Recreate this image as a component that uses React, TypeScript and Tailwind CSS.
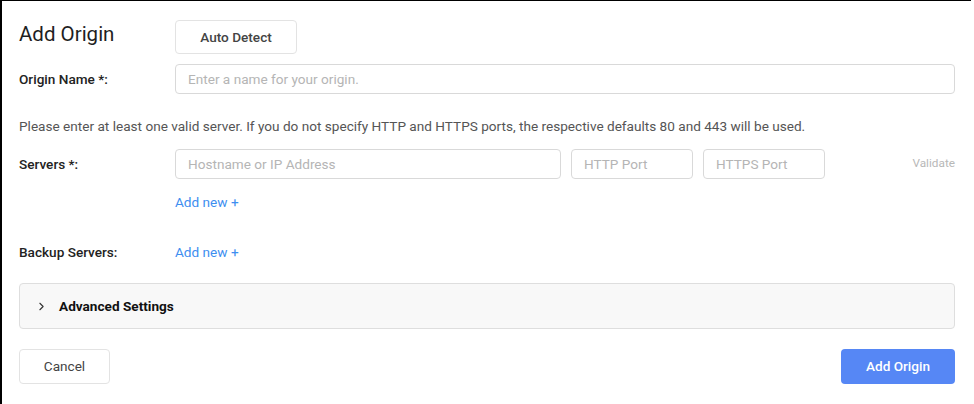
import { ChevronRight } from "lucide-react"

export default function App() {
  const inputCls =
    "h-[30px] rounded-[4px] border border-[#d9d9d9] px-3 text-[13.6px] text-[#333] placeholder:text-[#b5b5b5] outline-none"
  const labelCls = "w-[156px] text-[13.6px] font-medium text-[#222]"
  const linkCls = "text-[13.6px] text-[#3d8ef0] cursor-pointer"

  return (
    <div className="w-[974px] h-[404px] bg-white" style={{ fontFamily: "Roboto, 'Liberation Sans', sans-serif" }}>
      <div className="w-[971px] h-[404px] border-t border-l-2 border-black pl-[17px] pr-[16px] pt-[19px]">
        {/* Title */}
        <div className="flex items-center h-[34px]">
          <h1 className="w-[156px] mb-[6px] text-[20.5px] font-normal text-[#1f1f1f] leading-none">Add Origin</h1>
          <button className="h-[34px] w-[122px] rounded-[4px] border border-[#e3e3e3] bg-white text-[13.6px] font-medium text-[#444]">
            Auto Detect
          </button>
        </div>

        {/* Origin name */}
        <div className="flex items-center mt-[10px]">
          <label className={labelCls}>Origin Name *:</label>
          <input className={`${inputCls} flex-1`} placeholder="Enter a name for your origin." />
        </div>

        <p className="mt-[22px] text-[13.6px] leading-[20px] text-[#555]">
          Please enter at least one valid server. If you do not specify HTTP and HTTPS ports, the respective defaults 80 and 443 will be used.
        </p>

        {/* Servers */}
        <div className="flex items-center mt-[13px]">
          <label className={labelCls}>Servers *:</label>
          <input className={`${inputCls} w-[386px]`} placeholder="Hostname or IP Address" />
          <input className={`${inputCls} w-[122px] ml-[10px]`} placeholder="HTTP Port" />
          <input className={`${inputCls} w-[122px] ml-[10px]`} placeholder="HTTPS Port" />
          <span className="ml-auto text-[11.8px] text-[#b8b8b8]">Validate</span>
        </div>
        <div className="pl-[156px] mt-[13px] h-[20px] leading-[20px]">
          <a className={linkCls}>Add new +</a>
        </div>

        {/* Backup servers */}
        <div className="flex items-center mt-[30px] h-[20px]">
          <label className={labelCls}>Backup Servers:</label>
          <a className={linkCls}>Add new +</a>
        </div>

        {/* Advanced settings */}
        <div className="mt-[21px] h-[46px] rounded-[4px] border border-[#dedede] bg-[#f8f8f8] flex items-center pl-[15px]">
          <ChevronRight className="w-[13px] h-[13px] text-[#333]" strokeWidth={2} />
          <span className="ml-[11px] text-[13.6px] font-bold text-[#111]">Advanced Settings</span>
        </div>

        {/* Footer */}
        <div className="mt-[20px] flex justify-between">
          <button className="h-[35px] w-[91px] rounded-[4px] border border-[#e3e3e3] bg-white text-[13.6px] text-[#444]">
            Cancel
          </button>
          <button className="h-[35px] w-[114px] rounded-[4px] bg-[#5687f5] text-[13.6px] font-medium text-white">
            Add Origin
          </button>
        </div>
      </div>
    </div>
  )
}
